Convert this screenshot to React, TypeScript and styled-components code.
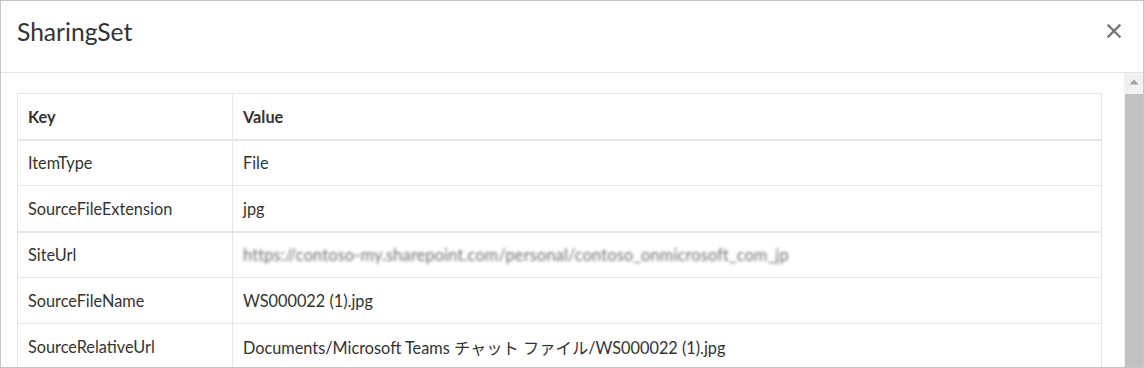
import React from "react";
import styled, { createGlobalStyle } from "styled-components";

const Global = createGlobalStyle`
  html, body { margin: 0; padding: 0; background: #ffffff; }
  body { font-family: Lato, "Noto Sans CJK JP", sans-serif; color: #333333; }
  * { box-sizing: border-box; }
`;

const Modal = styled.div`
  width: 1144px;
  height: 368px;
  border: 1px solid #c6c6c6;
  background: #ffffff;
  display: flex;
  flex-direction: column;
  overflow: hidden;
`;

const Header = styled.div`
  height: 72px;
  flex: none;
  display: flex;
  align-items: center;
  justify-content: space-between;
  padding: 0 22px 0 16px;
  border-bottom: 1px solid #e5e5e5;
`;

const Title = styled.h4`
  margin: 0;
  font-family: Lato, sans-serif;
  font-weight: 400;
  font-size: 24.6px;
  color: #333333;
  line-height: 1;
  padding-bottom: 8px;
`;

const CloseButton = styled.button`
  border: 0;
  background: transparent;
  padding: 0;
  width: 14px;
  height: 14px;
  display: flex;
  align-items: center;
  justify-content: center;
  margin-bottom: 12px;
  cursor: pointer;
`;

const Body = styled.div`
  flex: 1;
  display: flex;
  min-height: 0;
`;

const Content = styled.div`
  flex: 1;
  padding: 20px 22px 0 16px;
  overflow: hidden;
`;

const Scrollbar = styled.div`
  width: 19px;
  flex: none;
  background: #f1f1f1;
  display: flex;
  flex-direction: column;
  align-items: stretch;
  padding: 0 0 0 1px;
`;

const ScrollArrow = styled.div`
  height: 21px;
  display: flex;
  align-items: center;
  justify-content: center;
  padding-bottom: 3px;
`;

const ScrollThumb = styled.div`
  flex: 1;
  background: #c1c1c1;
`;

const Table = styled.table`
  width: 100%;
  border-collapse: collapse;
  border: 1px solid #e6e6e6;
  font-size: 16.3px;
  font-family: Lato, "Noto Sans CJK JP", sans-serif;
  color: #333333;
`;

const Th = styled.th<{ $w?: number }>`
  text-align: left;
  font-weight: 700;
  height: 46px;
  padding: 0 10px;
  border: 1px solid #e6e6e6;
  border-bottom-width: 2px;
  ${(p) => (p.$w ? `width: ${p.$w}px;` : "")}
`;

const Td = styled.td<{ $thick?: boolean }>`
  height: 46px;
  padding: 0 10px;
  border: 1px solid #e6e6e6;
  ${(p) => (p.$thick ? "border-top-width: 2px;" : "")}
  white-space: nowrap;
`;

const Blurred = styled.span`
  display: inline-block;
  color: #707070;
  filter: blur(1.4px);
  letter-spacing: 0.2px;
  user-select: none;
`;

const rows: { key: string; value: React.ReactNode; thick?: boolean }[] = [
  { key: "ItemType", value: "File" },
  { key: "SourceFileExtension", value: "jpg" },
  {
    key: "SiteUrl",
    thick: true,
    value: <Blurred>https://contoso-my.sharepoint.com/personal/contoso_onmicrosoft_com_jp</Blurred>,
  },
  { key: "SourceFileName", value: "WS000022 (1).jpg" },
  {
    key: "SourceRelativeUrl",
    value: "Documents/Microsoft Teams チャット ファイル/WS000022 (1).jpg",
  },
];

export default function App() {
  return (
    <>
      <Global />
      <Modal>
        <Header>
          <Title>SharingSet</Title>
          <CloseButton aria-label="Close">
            <svg width="14" height="14" viewBox="0 0 14 14">
              <path d="M1.5 1.5 L12.5 12.5 M12.5 1.5 L1.5 12.5" stroke="#777777" strokeWidth="2.4" strokeLinecap="square" />
            </svg>
          </CloseButton>
        </Header>
        <Body>
          <Content>
            <Table>
              <thead>
                <tr>
                  <Th $w={215}>Key</Th>
                  <Th>Value</Th>
                </tr>
              </thead>
              <tbody>
                {rows.map((r) => (
                  <tr key={r.key}>
                    <Td $thick={r.thick}>{r.key}</Td>
                    <Td $thick={r.thick}>{r.value}</Td>
                  </tr>
                ))}
              </tbody>
            </Table>
          </Content>
          <Scrollbar>
            <ScrollArrow>
              <svg width="10" height="6" viewBox="0 0 10 6">
                <path d="M5 0.5 L9.5 5.5 L0.5 5.5 Z" fill="#a3a3a3" />
              </svg>
            </ScrollArrow>
            <ScrollThumb />
          </Scrollbar>
        </Body>
      </Modal>
    </>
  );
}
